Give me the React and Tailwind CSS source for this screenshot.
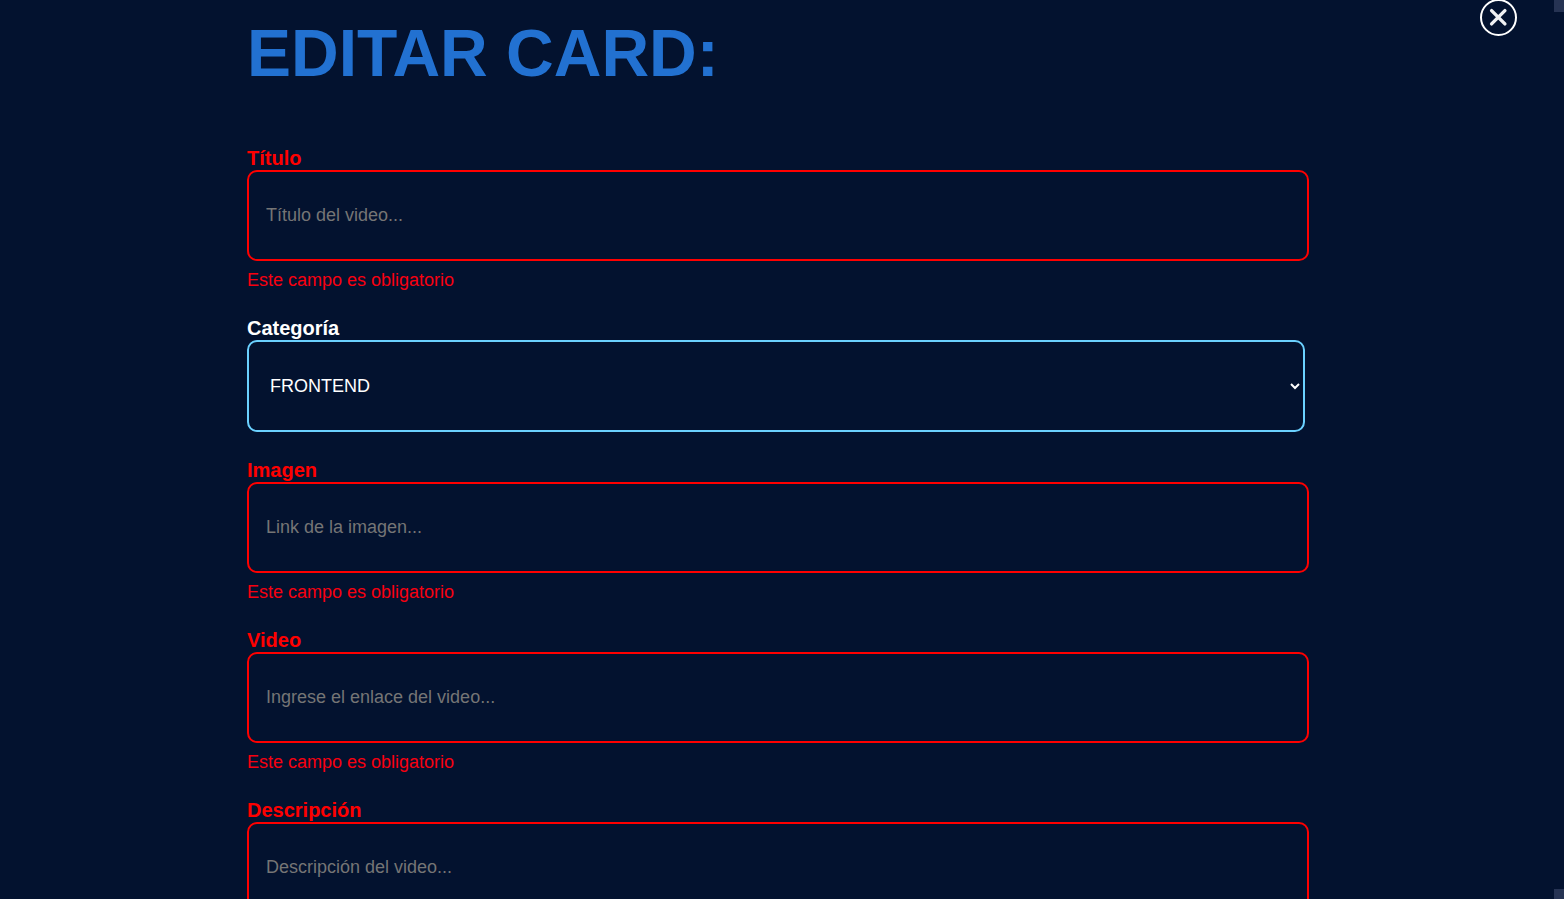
const requiredMessage = "Este campo es obligatorio";

const fields = [
  { id: "titulo", label: "Título", placeholder: "Título del video...", error: requiredMessage },
  { id: "categoria", label: "Categoría", options: ["FRONTEND", "BACKEND", "INNOVACIÓN Y GESTIÓN"] },
  { id: "imagen", label: "Imagen", placeholder: "Link de la imagen...", error: requiredMessage },
  { id: "video", label: "Video", placeholder: "Ingrese el enlace del video...", error: requiredMessage },
  { id: "descripcion", label: "Descripción", placeholder: "Descripción del video..." },
];

function TextField({ id, label, placeholder, error }) {
  return (
    <div className="flex flex-col">
      <label htmlFor={id} className="text-[20px] leading-[23px] font-bold text-[#ff0000]">
        {label}
      </label>
      <input
        id={id}
        type="text"
        placeholder={placeholder}
        aria-invalid="true"
        aria-describedby={error ? `${id}-error` : undefined}
        className="h-[91px] w-full rounded-[10px] border-2 border-[#ff0000] bg-transparent px-[17px] text-[18px] text-white outline-none placeholder:text-[#757575]"
      />
      {error && (
        <p id={`${id}-error`} className="mt-2 text-[18px] leading-[22px] text-[#f8000f]">
          {error}
        </p>
      )}
    </div>
  );
}

function SelectField({ id, label, options }) {
  return (
    <div className="flex flex-col pb-px">
      <label htmlFor={id} className="text-[20px] leading-[23px] font-bold text-white">
        {label}
      </label>
      <div className="mr-1 flex">
        <select
          id={id}
          className="h-[92px] w-full rounded-[10px] border-2 border-[#6bd1ff] bg-[#03122f] pr-[2px] pl-[17px] text-[18px] text-white outline-none"
        >
          {options.map((option) => (
            <option key={option}>{option}</option>
          ))}
        </select>
      </div>
    </div>
  );
}

export default function App() {
  return (
    <div className="flex h-screen overflow-hidden bg-[#03122f] font-['Liberation_Sans',Arial,sans-serif]">
      <main className="relative min-w-0 flex-1 overflow-hidden pr-[245px] pl-[247px]">
        <h1 className="pt-4 text-[66px] leading-[74px] font-bold text-[#2271d1]">EDITAR CARD:</h1>
        <form className="mt-[57px] flex flex-col gap-[26px]">
          {fields.map((field) =>
            field.options ? <SelectField key={field.id} {...field} /> : <TextField key={field.id} {...field} />
          )}
        </form>
        <button type="button" aria-label="Cerrar" className="absolute -top-px right-[37px]">
          <svg width="37" height="37" viewBox="0 0 37 37" fill="none" stroke="#fff" aria-hidden="true">
            <circle cx="18.5" cy="18.5" r="17.5" strokeWidth="2" />
            <path d="M11.6 11.6 24.9 24.9M24.9 11.6 11.6 24.9" strokeWidth="3.4" strokeLinecap="round" stroke="#f0f1f3" />
          </svg>
        </button>
      </main>
      <div className="flex w-[10px] flex-col justify-between" aria-hidden="true">
        <span className="h-3 bg-[#263353]" />
        <span className="h-[10px] bg-[#263353]" />
      </div>
    </div>
  );
}
